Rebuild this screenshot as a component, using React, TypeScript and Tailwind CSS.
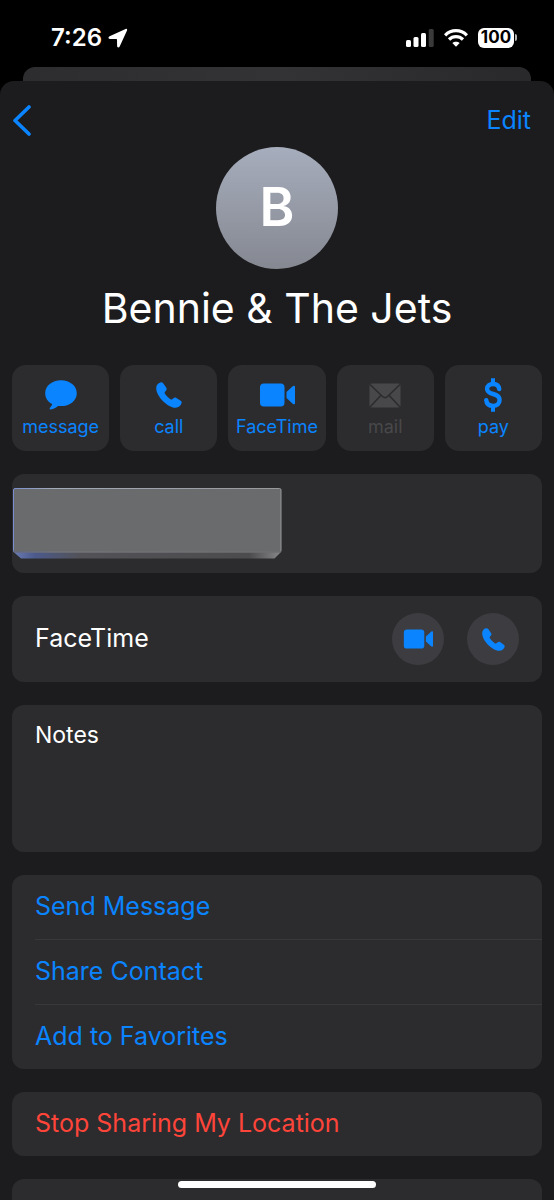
import type { ReactNode } from "react";

type IconProps = { className?: string };

function PhoneIcon({ className }: IconProps) {
  return (
    <svg viewBox="0 0 26 26" className={className} fill="currentColor" aria-hidden="true">
      <path d="M4.500.4C2 .9.2 3 .2 6.200c0 4 3 9 6.600 12.700 3.700 3.700 8.600 6.900 12.800 6.800 3.100 0 5.400-2.200 6-4.600.2-.9-.1-1.700-.9-2.300l-4.300-2.900c-.9-.6-1.900-.5-2.700.2l-1.400 1.200c-.5.4-1 .4-1.500.1-1.100-.7-2.300-1.700-3.300-2.700-1-1-2-2.200-2.700-3.300-.3-.5-.3-1 .1-1.500l1.200-1.400c.7-.8.8-1.800.2-2.700L7.300 1.500C6.700.6 5.700.2 4.500.4Z" />
    </svg>
  );
}

function VideoIcon({ className }: IconProps) {
  return (
    <svg viewBox="0 0 36 24" className={className} fill="currentColor" aria-hidden="true">
      <rect x="1" y="0.500" width="24.500" height="23" rx="3.800" />
      <path d="M27.500 8.900 33.700 3.200c1.200-1 2.300-.6 2.300.9v15.800c0 1.500-1.100 1.900-2.300.9L27.500 15.100Z" />
    </svg>
  );
}

function MessageIcon({ className }: IconProps) {
  return (
    <svg viewBox="0 0 32 30" className={className} fill="currentColor" aria-hidden="true">
      <path d="M16 .3C24.900.3 31.800 5.900 31.800 13.200S25 26.100 16 26.100c-1.200 0-2.100-.1-3-.2-2 1.600-4.600 3-7 3.500-1.300.3-1.800-.9-1-1.700 1.100-1.100 1.900-2.300 2.200-3.700C3 21.900.2 18.300.2 13.200.2 5.900 7.100.3 16 .3Z" />
    </svg>
  );
}

function MailIcon({ className }: IconProps) {
  return (
    <svg viewBox="0 0 32 25" className={className} aria-hidden="true">
      <rect x="0.500" y="0.500" width="31" height="24" rx="2" fill="currentColor" />
      <path
        d="M1 1.500 13.500 13.500q2.500 2.300 5 0L31 1.500M1.300 23.700 12 12.300M30.700 23.700 20 12.300"
        fill="none"
        className="stroke-[#2c2c2e]"
        strokeWidth="1.600"
      />
    </svg>
  );
}

function DollarIcon({ className }: IconProps) {
  return (
    <svg viewBox="0 0 18 34" className={className} fill="none" stroke="currentColor" aria-hidden="true">
      <path
        d="M15.200 11.100C14.800 7.700 12.600 6 9.100 6 5.600 6 3.100 7.900 3.100 10.800c0 3.100 2.500 4.300 6 5.200 4 1 6.500 2.500 6.500 6 0 3.700-2.700 5.900-6.500 5.900-4 0-6.500-2-6.800-5.600"
        strokeWidth="4.400"
        strokeLinecap="round"
      />
      <path d="M9 .3v5M9 28.500v5.200" strokeWidth="4" />
    </svg>
  );
}

function StatusBar() {
  return (
    <header className="flex h-[67px] shrink-0 items-center justify-between pt-2 pr-[37px] pl-[51px]">
      <div className="flex items-center gap-1.5">
        <time className="text-2xl font-semibold">7:26</time>
        <svg viewBox="0 0 20 20" className="size-5" fill="currentColor" aria-hidden="true">
          <path d="M17.600.9 1.600 8.200C-.1 9 .2 10.900 1.900 10.900h6.400c.5 0 .7.200.7.700l.1 6.500c0 1.700 1.900 2 2.600.3L19 2.400C19.500 1.100 18.800.4 17.600.9Z" />
        </svg>
      </div>
      <div className="flex items-center">
        <svg viewBox="0 0 28 18" className="mr-2.5 h-[18px] w-7" fill="currentColor" aria-label="Signal">
          <rect x="0" y="11" width="5" height="7" rx="1.500" />
          <rect x="7.500" y="8" width="5" height="10" rx="1.500" />
          <rect x="15" y="4" width="5" height="14" rx="1.500" />
          <rect x="22.700" y="0" width="5" height="18" rx="1.500" className="fill-[#3a3a3a]" />
        </svg>
        <svg viewBox="0 0 24 18" className="mr-2.5 h-[18px] w-6" fill="none" stroke="currentColor" strokeWidth="3.200" aria-label="Wi-Fi">
          <path d="M1.100 6.300C7.200.1 16.800.1 22.900 6.300" />
          <path d="M5 10.500c3.900-3.900 10.100-3.900 14 0" />
          <path d="m12 17.800-3.700-3.700c2-1.900 5.400-1.900 7.400 0Z" fill="currentColor" stroke="none" />
        </svg>
        <div className="flex items-center gap-px">
          <span className="flex h-5 w-9 items-center justify-center rounded-md bg-white text-[17px] font-bold text-black">
            100
          </span>
          <span className="h-[7px] w-0.5 rounded-r-full bg-[#b5b5b5]" />
        </div>
      </div>
    </header>
  );
}

const actions = [
  { label: "message", icon: <MessageIcon className="h-[30px] w-8" /> },
  { label: "call", icon: <PhoneIcon className="size-[26px]" /> },
  { label: "FaceTime", icon: <VideoIcon className="h-6 w-9" /> },
  { label: "mail", icon: <MailIcon className="h-[25px] w-8" />, disabled: true },
  { label: "pay", icon: <DollarIcon className="h-[34px] w-[18px]" /> },
];

function QuickActions() {
  return (
    <div className="grid grid-cols-5 gap-[11px]">
      {actions.map(({ label, icon, disabled }) => (
        <button
          key={label}
          type="button"
          disabled={disabled}
          className="flex h-[86px] flex-col items-center rounded-[14px] bg-[#2c2c2e] pt-3 text-[#0a84ff] disabled:text-[#48484a]"
        >
          <span className="flex h-9 items-center">{icon}</span>
          <span className="text-lg leading-7">{label}</span>
        </button>
      ))}
    </div>
  );
}

function Card({ children, className = "" }: { children?: ReactNode; className?: string }) {
  return <section className={`shrink-0 rounded-xl bg-[#2c2c2e] ${className}`}>{children}</section>;
}

function RedactedNumber() {
  return (
    <svg viewBox="0 0 269 71" className="ml-px h-[71px] w-[269px]" aria-hidden="true">
      <defs>
        <linearGradient id="bevel">
          <stop offset="0" stopColor="#6b7cb5" />
          <stop offset="0.080" stopColor="#4c5a8c" />
          <stop offset="0.250" stopColor="#525257" />
          <stop offset="0.880" stopColor="#4c4b4d" />
          <stop offset="1" stopColor="#88888a" />
        </linearGradient>
        <linearGradient id="rim">
          <stop offset="0" stopColor="#7a8fd0" />
          <stop offset="0.150" stopColor="#a3aab8" />
          <stop offset="1" stopColor="#97999b" />
        </linearGradient>
      </defs>
      <path d="M0 63.500h268.500l-7 7H8Z" fill="url(#bevel)" />
      <rect x="0.500" y="0.500" width="267.500" height="63.500" rx="1.500" fill="#6a6b6c" stroke="url(#rim)" />
      <path d="M1 64h267" stroke="#59595b" />
    </svg>
  );
}

const links = ["Send Message", "Share Contact", "Add to Favorites"];

export default function App() {
  return (
    <div className="relative flex h-screen flex-col overflow-hidden bg-black font-['Inter','Liberation_Sans',sans-serif] text-white">
      <StatusBar />
      <div className="mx-[23px] h-3.5 shrink-0 rounded-t-xl bg-linear-to-r from-[#2d2d2f] via-[#333335] to-[#29292b]" />

      <main className="flex min-h-0 flex-1 flex-col gap-[23px] overflow-y-auto rounded-t-[14px] bg-[#1c1c1e] px-3 [scrollbar-width:none]">
        <div className="shrink-0">
          <nav className="flex h-[66px] items-start justify-between pt-5 pr-[11px]">
            <button type="button" aria-label="Back" className="mt-1 text-[#0a84ff]">
              <svg viewBox="0 0 20 31" className="h-[31px] w-5" fill="none" stroke="currentColor" aria-hidden="true">
                <path d="M17 2 3 15.500 17 29" strokeWidth="3.600" strokeLinecap="round" strokeLinejoin="round" />
              </svg>
            </button>
            <button type="button" className="text-[25px] leading-[38px] text-[#0a84ff]">
              Edit
            </button>
          </nav>

          <div className="mx-auto flex size-[122px] items-center justify-center rounded-full bg-linear-to-b from-[#a6adbc] to-[#858891] text-[53px] font-semibold">
            B
          </div>
          <h1 className="mt-2.5 mb-7 text-center text-[41px] leading-[58px]">Bennie &amp; The Jets</h1>

          <QuickActions />
        </div>

        <Card className="h-[99px] pt-3.5">
          <RedactedNumber />
        </Card>

        <Card className="flex h-[86px] items-center justify-between px-[23px]">
          <h2 className="text-[25px]">FaceTime</h2>
          <div className="flex gap-[23px]">
            <button
              type="button"
              aria-label="FaceTime video"
              className="flex size-[52px] items-center justify-center rounded-full bg-[#3d3c41] text-[#0a84ff]"
            >
              <VideoIcon className="h-5 w-[30px]" />
            </button>
            <button
              type="button"
              aria-label="FaceTime audio"
              className="flex size-[52px] items-center justify-center rounded-full bg-[#3d3c41] text-[#0a84ff]"
            >
              <PhoneIcon className="size-[23px]" />
            </button>
          </div>
        </Card>

        <Card className="flex h-[147px] flex-col px-[23px] pt-3.5">
          <label htmlFor="notes" className="text-[23px] leading-8">
            Notes
          </label>
          <textarea id="notes" className="w-full flex-1 resize-none bg-transparent text-[23px] outline-none" />
        </Card>

        <Card>
          <ul className="divide-y divide-[#38383a] pl-[23px]">
            {links.map((label) => (
              <li key={label}>
                <button type="button" className="h-16 w-full text-left text-[25px] text-[#0a84ff]">
                  {label}
                </button>
              </li>
            ))}
          </ul>
        </Card>

        <Card>
          <button type="button" className="h-16 w-full px-[23px] text-left text-[25px] text-[#ff453a]">
            Stop Sharing My Location
          </button>
        </Card>

        <Card className="h-16" />
      </main>

      <div className="absolute bottom-3 left-1/2 h-[7px] w-[198px] -translate-x-1/2 rounded-full bg-white" />
    </div>
  );
}
